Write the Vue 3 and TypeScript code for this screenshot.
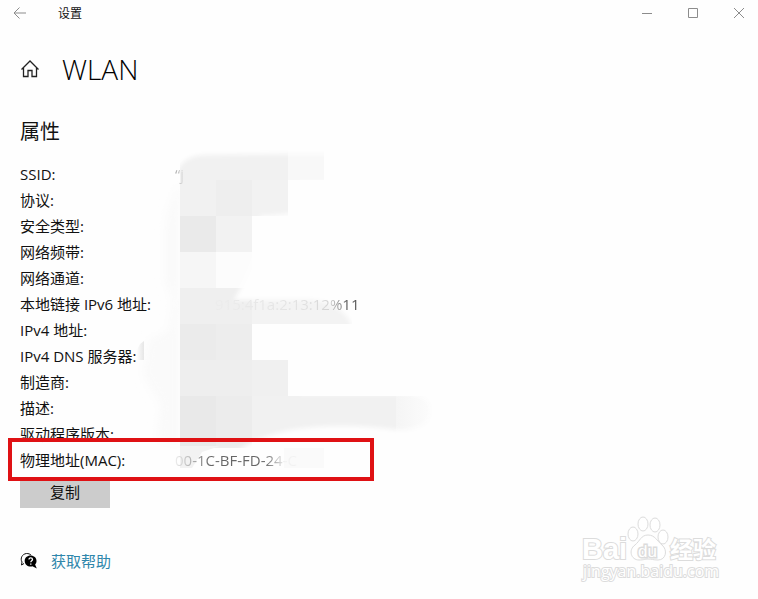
<script setup lang="ts">
interface Property {
  label: string
  value?: string
  kind?: string
}

const properties: Property[] = [
  { label: 'SSID:', value: '“j', kind: 'ssid' },
  { label: '协议:' },
  { label: '安全类型:' },
  { label: '网络频带:' },
  { label: '网络通道:' },
  { label: '本地链接 IPv6 地址:', value: '915:4f1a:2:13:12%11', kind: 'ipv6' },
  { label: 'IPv4 地址:' },
  { label: 'IPv4 DNS 服务器:' },
  { label: '制造商:' },
  { label: '描述:' },
  { label: '驱动程序版本:' },
  { label: '物理地址(MAC):', value: '00-1C-BF-FD-24-C', kind: 'mac' },
]
</script>

<template>
  <div class="window">
    <header class="titlebar">
      <button class="back" type="button" aria-label="返回">
        <svg width="14" height="12" viewBox="0 0 14 12"><path d="M13 6H1M6.500 .5L1 6l5.500 5.500" /></svg>
      </button>
      <span class="app-name">设置</span>
      <div class="controls">
        <button type="button" aria-label="最小化">
          <svg width="12" height="12" viewBox="0 0 12 12"><path d="M1 6.500H11" /></svg>
        </button>
        <button type="button" aria-label="最大化">
          <svg width="12" height="12" viewBox="0 0 12 12"><path d="M1.500 1.500h9v9h-9z" /></svg>
        </button>
        <button type="button" aria-label="关闭">
          <svg width="12" height="12" viewBox="0 0 12 12"><path d="M1 1l10 10M11 1L1 11" /></svg>
        </button>
      </div>
    </header>

    <main class="content">
      <div class="heading">
        <svg class="home" width="20" height="20" viewBox="0 0 20 20" aria-hidden="true">
          <path d="M1.500 10.500L10 2l8.500 8.500M3.500 9v8.500h4.500v-6h4v6h4.500V9" />
        </svg>
        <h1>WLAN</h1>
      </div>

      <h2>属性</h2>

      <div class="details">
        <svg class="mosaic" width="320" height="330" viewBox="130 145 320 330" aria-hidden="true">
          <defs>
            <filter id="soft" x="-20%" y="-20%" width="140%" height="140%">
              <feGaussianBlur stdDeviation="4" />
            </filter>
            <filter id="edge" x="-5%" y="-5%" width="110%" height="110%">
              <feGaussianBlur stdDeviation="2" />
            </filter>
            <linearGradient id="tail">
              <stop offset="0" stop-color="#f5f5f5" />
              <stop offset="1" stop-color="#fcfcfc" />
            </linearGradient>
            <linearGradient id="nub">
              <stop offset="0" stop-color="#fff" />
              <stop offset="1" stop-color="#e6e6e6" />
            </linearGradient>
            <mask id="smear">
              <path
                fill="#fff"
                filter="url(#edge)"
                d="M176 174Q182 156 204 155L288 154H340V182H300V212Q270 216 260 216V240Q250 272 240 289L234 300H300Q340 298 352 326V350H300V394H396Q430 392 431 410Q430 430 398 430Q340 422 290 430Q270 434 252 442L238 450H170V180Z"
              />
            </mask>
          </defs>
          <path
            fill="#fafafa"
            filter="url(#soft)"
            d="M180 180Q166 205 164 230V280L172 300L168 330L148 340L142 375L160 405L156 440L180 446Z"
          />
          <path fill="url(#nub)" d="M136 360Q136 345 144 341V360Z" />
          <g mask="url(#smear)">
            <path fill="#f1f1f1" d="M180 150h36v66h-36zM216 150h72v30h-72z" />
            <path fill="#f8f8f8" d="M288 150h36v30h-36z" />
            <path fill="#eee" d="M216 180h36v36h-36z" />
            <path fill="#f2f2f2" d="M252 180h36v36h-36zM216 216h36v36h-36z" />
            <path fill="#eaeaea" d="M180 216h36v36h-36z" />
            <path fill="#f6f6f6" d="M180 252h36v36h-36z" />
            <path fill="#fcfcfc" d="M216 252h36v36h-36z" />
            <path fill="#efefef" d="M180 288h72v36h-72z" />
            <path fill="#f3f3f3" d="M252 288h100v36h-100z" />
            <path fill="#ebebeb" d="M180 324h36v36h-36z" />
            <path fill="#ededed" d="M216 324h36v36h-36z" />
            <path fill="#eee" d="M180 360h72v36h-72z" />
            <path fill="#f0f0f0" d="M252 360h36v36h-36z" />
            <path fill="#e9e9e9" d="M180 396h36v52h-36z" />
            <path fill="#ececec" d="M216 396h36v52h-36z" />
            <path fill="#f1f1f1" d="M252 396h144v42h-144z" />
            <path fill="url(#tail)" d="M396 396h36v42h-36z" />
          </g>
          <path fill="#f2f2f2" d="M180 446h40l-18 6-10 16h-12z" />
          <path fill="#fafafa" d="M284 448h40v20h-40z" />
        </svg>
        <dl>
          <div v-for="item in properties" :key="item.label" class="row">
            <dt>{{ item.label }}</dt>
            <dd v-if="item.value" :class="item.kind">{{ item.value }}</dd>
          </div>
        </dl>
        <div class="marker" aria-hidden="true"></div>
      </div>

      <button class="copy" type="button">复制</button>

      <a class="help" href="#help">
        <svg width="18" height="18" viewBox="0 0 18 18" aria-hidden="true">
          <path class="bubble-line" d="M4 11.500L1.500 13l.5-3C0 6.500 2 2 6.500 1.500c2 0 3.500.5 4.500 1.500" />
          <path
            class="bubble"
            d="M10.500 3.500c3.500 0 6 2.300 6 5.400 0 1.500-.5 2.600-1.400 3.500l1.700 4-4.300-2.200c-4 1-7.800-1.400-7.800-5.300 0-3.100 2.500-5.400 5.800-5.400z"
          />
          <path class="question" d="M9 7.500c0-2.200 3.500-2 3.500 0 0 1.200-1.700 1.400-1.700 2.700M10.800 11.500v1.200" />
        </svg>
        <span>获取帮助</span>
      </a>
    </main>

    <svg class="watermark" width="150" height="75" viewBox="0 0 150 75">
      <ellipse cx="58" cy="22" rx="5" ry="7" />
      <ellipse cx="68" cy="12" rx="5" ry="7" />
      <ellipse cx="80" cy="13" rx="5" ry="7" />
      <ellipse cx="88" cy="25" rx="5" ry="7" />
      <path d="M73 23C66 23 65 29 60 33C53 38 56 48 64 48C69 48 70 47 73 47C77 47 78 48 83 48C91 48 93 38 87 33C82 29 80 23 73 23Z" />
      <text class="brand" x="7" y="47">Bai</text>
      <text class="du" x="63" y="45">du</text>
      <text class="cjk" x="95" y="46">经验</text>
      <text class="site" x="8" y="65">jingyan.baidu.com</text>
    </svg>
  </div>
</template>

<style>
body {
  background: #fefefe;
}
</style>

<style scoped>
.window {
  position: relative;
  box-sizing: border-box;
  min-height: 100vh;
  font-family: "Open Sans", "Noto Sans CJK SC", sans-serif;
  font-size: 15px;
  color: #111;
}

button {
  padding: 0;
  border: 0;
  background: none;
  font: inherit;
  color: inherit;
}

.titlebar {
  display: flex;
  align-items: center;
  height: 26px;
}

.titlebar svg {
  display: block;
  fill: none;
  stroke: #8c8c8c;
}

.back {
  display: flex;
  justify-content: center;
  width: 40px;
}

.app-name {
  margin-left: 18px;
  font-size: 12px;
}

.controls {
  display: flex;
  margin-left: auto;
  padding-right: 12px;
  gap: 32px;
}

.controls button {
  padding: 0 1px;
}

.content {
  padding: 24px 20px 0;
}

.heading {
  display: flex;
  align-items: center;
  gap: 22px;
}

.home {
  fill: none;
  stroke: #222;
  stroke-width: 1.3;
}

h1 {
  margin: 0;
  font-size: 28px;
  font-weight: 300;
  line-height: 38px;
  color: #000;
}

h2 {
  margin: 30px 0 15px;
  font-size: 20px;
  font-weight: 400;
  line-height: 28px;
}

.details {
  position: relative;
  z-index: 1;
}

.mosaic {
  position: absolute;
  left: 110px;
  top: -16px;
}

dl {
  position: relative;
  margin: 0;
}

.row {
  display: grid;
  grid-template-columns: 155px 1fr;
  line-height: 26px;
}

dt {
  white-space: nowrap;
}

dd {
  margin: 0;
  justify-self: start;
  color: transparent;
  background-clip: text;
}

.ssid {
  background-image: linear-gradient(90deg, #aaa, #e4e4e4);
}

.ipv6 {
  margin-left: 40px;
  background-image: linear-gradient(90deg, #ececec, #e2e2e2 60%, #d4d4d4 80%, #555 92%);
}

.mac {
  background-image: linear-gradient(90deg, #eee, #888 22%, #666 30%, #666 74%, #c0c0c0 84%, #f2f2f2 90%);
}

.marker {
  position: absolute;
  box-sizing: border-box;
  left: -12px;
  bottom: -8px;
  width: 366px;
  height: 43px;
  border: 4px solid #df1114;
  pointer-events: none;
}

.copy {
  display: block;
  width: 90px;
  height: 30px;
  margin-top: 5px;
  padding-bottom: 3px;
  background: #ccc;
}

.help {
  display: inline-flex;
  align-items: center;
  gap: 13px;
  margin-top: 43px;
  line-height: 20px;
  color: #2e86ab;
  text-decoration: none;
}

.bubble-line {
  fill: none;
  stroke: #111;
}

.bubble {
  fill: #000;
}

.question {
  fill: none;
  stroke: #fff;
  stroke-width: 1.3;
}

.watermark {
  position: absolute;
  right: 33px;
  bottom: 12px;
  fill: #fff;
  stroke: #dcdcdc;
  stroke-width: 1;
}

.watermark text {
  paint-order: stroke;
  stroke-width: 2;
}

.brand {
  font-family: "Liberation Sans", sans-serif;
  font-size: 29px;
  font-weight: 700;
}

.watermark .du {
  font-family: "Liberation Sans", sans-serif;
  font-size: 17px;
  font-weight: 400;
  stroke-width: 3;
}

.cjk {
  font-size: 23px;
  font-weight: 700;
}

.site {
  font-size: 16px;
}
</style>
